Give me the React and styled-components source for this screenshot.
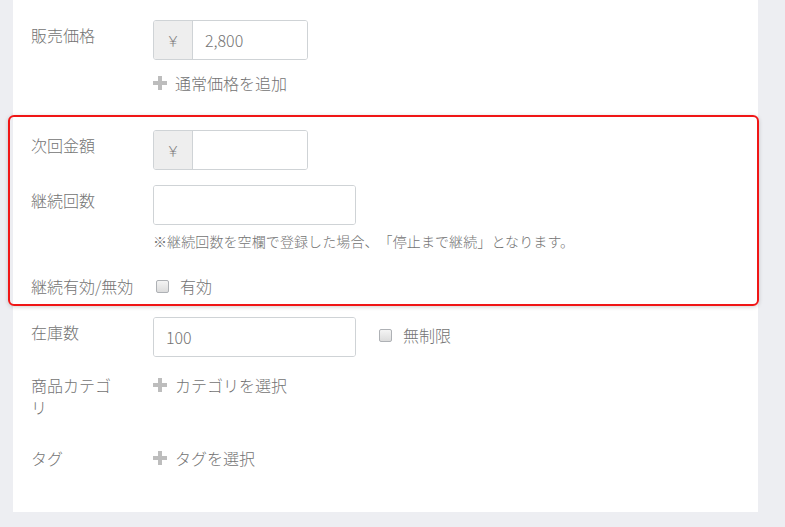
import React from "react";
import styled, { createGlobalStyle } from "styled-components";

const GlobalStyle = createGlobalStyle`
  html, body {
    margin: 0;
    padding: 0;
    background: #edeef2;
  }
  body {
    font-family: "Noto Sans CJK JP", "Noto Sans", sans-serif;
    font-weight: 300;
    color: #777;
    text-spacing-trim: space-all;
  }
`;

const Page = styled.div`
  width: 785px;
  height: 527px;
  overflow: hidden;
`;

const Card = styled.div`
  margin-left: 13px;
  width: 745px;
  height: 512px;
  background: #fff;
  box-sizing: border-box;
  padding: 20px 0 0 18px;
`;

const Highlight = styled.div`
  margin: 21px 0 11px -23px;
  width: 751px;
  box-sizing: border-box;
  border: 2px solid #f01616;
  border-radius: 6px;
  padding: 13px 0 7px 21px;
  box-shadow: 0 1px 4px rgba(0, 0, 0, 0.18);
`;

const Row = styled.div`
  display: flex;
  align-items: flex-start;
  margin-top: ${(p) => p.$gap || 0}px;
`;

const Label = styled.div`
  flex: 0 0 auto;
  width: ${(p) => p.$width || 122}px;
  margin-right: ${(p) => 122 - (p.$width || 122)}px;
  box-sizing: border-box;
  font-size: 16px;
  line-height: 22px;
  padding-top: ${(p) => (p.$pad === undefined ? 4 : p.$pad)}px;
  color: #737373;
`;

const Field = styled.div`
  display: flex;
  flex-direction: column;
`;

const InputGroup = styled.div`
  display: flex;
  width: ${(p) => p.$width}px;
  height: 40px;
  box-sizing: border-box;
  border: 1px solid #cfd3d6;
  border-radius: 3px;
  overflow: hidden;
`;

const Addon = styled.span`
  width: 38px;
  display: flex;
  align-items: center;
  justify-content: center;
  background: #eeeeee;
  border-right: 1px solid #cfd3d6;
  font-size: 14px;
  color: #808080;
`;

const Input = styled.input`
  flex: 1;
  min-width: 0;
  border: none;
  outline: none;
  padding: 0 12px;
  font-family: inherit;
  font-weight: 300;
  font-size: 16px;
  color: #737373;
  background: #fff;
`;

const AddLink = styled.a`
  display: flex;
  align-items: center;
  gap: 8px;
  font-size: 16px;
  line-height: 22px;
  color: #737373;
  text-decoration: none;
  margin-top: ${(p) => p.$top || 0}px;
`;

const Hint = styled.div`
  font-size: 14px;
  line-height: 20px;
  letter-spacing: 0.1px;
  margin-top: 6px;
  color: #737373;
`;

const CheckLabel = styled.label`
  display: flex;
  align-items: center;
  gap: 11px;
  font-size: 16px;
  line-height: 22px;
  color: #737373;
  margin-left: ${(p) => p.$left || 0}px;
  padding-top: ${(p) => p.$top || 0}px;
`;

const Box = styled.span`
  width: 11px;
  height: 11px;
  border: 1px solid #aeb1b5;
  border-radius: 2px;
  background: linear-gradient(#f4f4f4, #dcdcdc);
`;

const Plus = () => (
  <svg width="14" height="14" viewBox="0 0 14 14">
    <rect x="5" y="0" width="4" height="14" fill="#bdbdbd" />
    <rect x="0" y="5" width="14" height="4" fill="#bdbdbd" />
  </svg>
);

export default function App() {
  return (
    <Page>
      <GlobalStyle />
      <Card>
        <Row>
          <Label>販売価格</Label>
          <Field>
            <InputGroup $width={155}>
              <Addon>￥</Addon>
              <Input defaultValue="2,800" />
            </InputGroup>
            <AddLink $top={12}>
              <Plus />
              通常価格を追加
            </AddLink>
          </Field>
        </Row>

        <Highlight>
          <Row>
            <Label>次回金額</Label>
            <InputGroup $width={155}>
              <Addon>￥</Addon>
              <Input />
            </InputGroup>
          </Row>
          <Row $gap={15}>
            <Label>継続回数</Label>
            <Field>
              <InputGroup $width={203}>
                <Input />
              </InputGroup>
              <Hint>
                ※継続回数を空欄で登録した場合、「停止まで継続」となります。
              </Hint>
            </Field>
          </Row>
          <Row $gap={24}>
            <Label $pad={0}>継続有効/無効</Label>
            <CheckLabel $left={3}>
              <Box />
              有効
            </CheckLabel>
          </Row>
        </Highlight>

        <Row>
          <Label>在庫数</Label>
          <InputGroup $width={203}>
            <Input defaultValue="100" />
          </InputGroup>
          <CheckLabel $left={23} $top={7}>
            <Box />
            無制限
          </CheckLabel>
        </Row>
        <Row $gap={17}>
          <Label $pad={0} $width={92}>
            商品カテゴリ
          </Label>
          <AddLink>
            <Plus />
            カテゴリを選択
          </AddLink>
        </Row>
        <Row $gap={29}>
          <Label $pad={0}>タグ</Label>
          <AddLink>
            <Plus />
            タグを選択
          </AddLink>
        </Row>
      </Card>
    </Page>
  );
}
